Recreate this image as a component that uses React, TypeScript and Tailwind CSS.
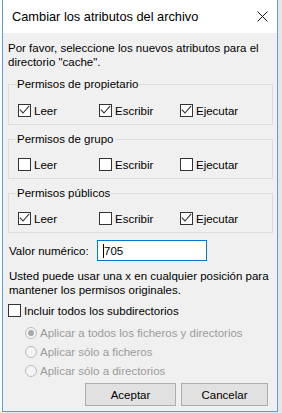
import React from "react"

const Check = ({ checked }: { checked?: boolean }) => (
  <span className="w-[13px] h-[13px] border border-[#333333] bg-white flex items-center justify-center shrink-0">
    {checked && (
      <svg width="11" height="11" viewBox="0 0 11 11">
        <path d="M0.8 4.6 L4 8 L10.2 0.8" stroke="#333333" fill="none" strokeWidth="1.1" />
      </svg>
    )}
  </span>
)

const Radio = ({ label, selected }: { label: string; selected?: boolean }) => (
  <div className="flex items-center h-[19px]">
    <span className="w-[12px] h-[12px] rounded-full border border-[#bcbcbc] bg-[#f4f4f4] flex items-center justify-center shrink-0">
      {selected && <span className="w-[6px] h-[6px] rounded-full bg-[#a8a8a8]" />}
    </span>
    <span className="ml-[3px] text-[#9b9b9b]">{label}</span>
  </div>
)

interface Group {
  title: string
  values: boolean[]
}

const groups: Group[] = [
  { title: "Permisos de propietario", values: [true, true, true] },
  { title: "Permisos de grupo", values: [false, false, false] },
  { title: "Permisos públicos", values: [true, false, true] },
]

const labels = ["Leer", "Escribir", "Ejecutar"]

export default function App() {
  return (
    <div
      className="w-[282px] h-[413px] bg-[#e8e8e8] flex flex-col overflow-hidden text-[11.5px] leading-[14px] text-black"
      style={{ fontFamily: '"Liberation Sans", Arial, sans-serif' }}
    >
      <div className="flex h-[412px]">
        <div className="w-[2px] bg-white" />
        <div className="w-[276px] flex flex-col border-x border-b border-[#5e9ddb] bg-[#f0f0f0]">
          <div className="h-[33px] bg-white flex items-center justify-between pl-[9px] pr-[9px] shrink-0">
            <span className="text-[12.8px]">Cambiar los atributos del archivo</span>
            <svg width="11" height="11" viewBox="0 0 11 11">
              <path d="M0.5 0.5 L10.5 10.5 M10.5 0.5 L0.5 10.5" stroke="#111" strokeWidth="1" />
            </svg>
          </div>
          <div className="flex flex-col pl-[5px] pr-[4px]">
            <p className="mt-[8px]">
              Por favor, seleccione los nuevos atributos para el directorio "cache".
            </p>
            {groups.map((g, i) => (
              <fieldset
                key={g.title}
                className={(i === 0 ? "mt-[8px] pt-[12px]" : "mt-[7px] pt-[11px]") + " border border-[#dcdcdc] pl-[9px] pb-[6px]"}
              >
                <legend className="ml-[-2px] px-[1px]">{g.title}</legend>
                <div className="grid grid-cols-[81px_81px_81px]">
                  {g.values.map((v, j) => (
                    <div key={j} className="flex items-center gap-[3px] h-[15px]">
                      <Check checked={v} />
                      <span>{labels[j]}</span>
                    </div>
                  ))}
                </div>
              </fieldset>
            ))}
            <div className="flex items-center mt-[7px] pl-[1px]">
              <span className="w-[88px]">Valor numérico:</span>
              <div className="w-[110px] h-[21px] border border-[#0078d7] bg-white flex items-center pl-[5px]">
                <span className="w-[1px] h-[14px] bg-black" />
                <span>705</span>
              </div>
            </div>
            <p className="mt-[8px] pl-[1px]">
              Usted puede usar una x en cualquier posición para mantener los permisos originales.
            </p>
            <div className="flex items-center gap-[3px] mt-[6px] h-[15px]">
              <Check />
              <span>Incluir todos los subdirectorios</span>
            </div>
            <div className="flex flex-col pl-[17px] mt-[5px]">
              <Radio label="Aplicar a todos los ficheros y directorios" selected />
              <Radio label="Aplicar sólo a ficheros" />
              <Radio label="Aplicar sólo a directorios" />
            </div>
            <div className="flex justify-end gap-[5px] mt-[3px] pr-[5px]">
              <button className="w-[91px] h-[23px] bg-[#e1e1e1] border border-[#adadad]">Aceptar</button>
              <button className="w-[87px] h-[23px] bg-[#e1e1e1] border border-[#adadad]">Cancelar</button>
            </div>
          </div>
        </div>
        <div className="flex-1 bg-[#e6e6e6]" />
      </div>
    </div>
  )
}
